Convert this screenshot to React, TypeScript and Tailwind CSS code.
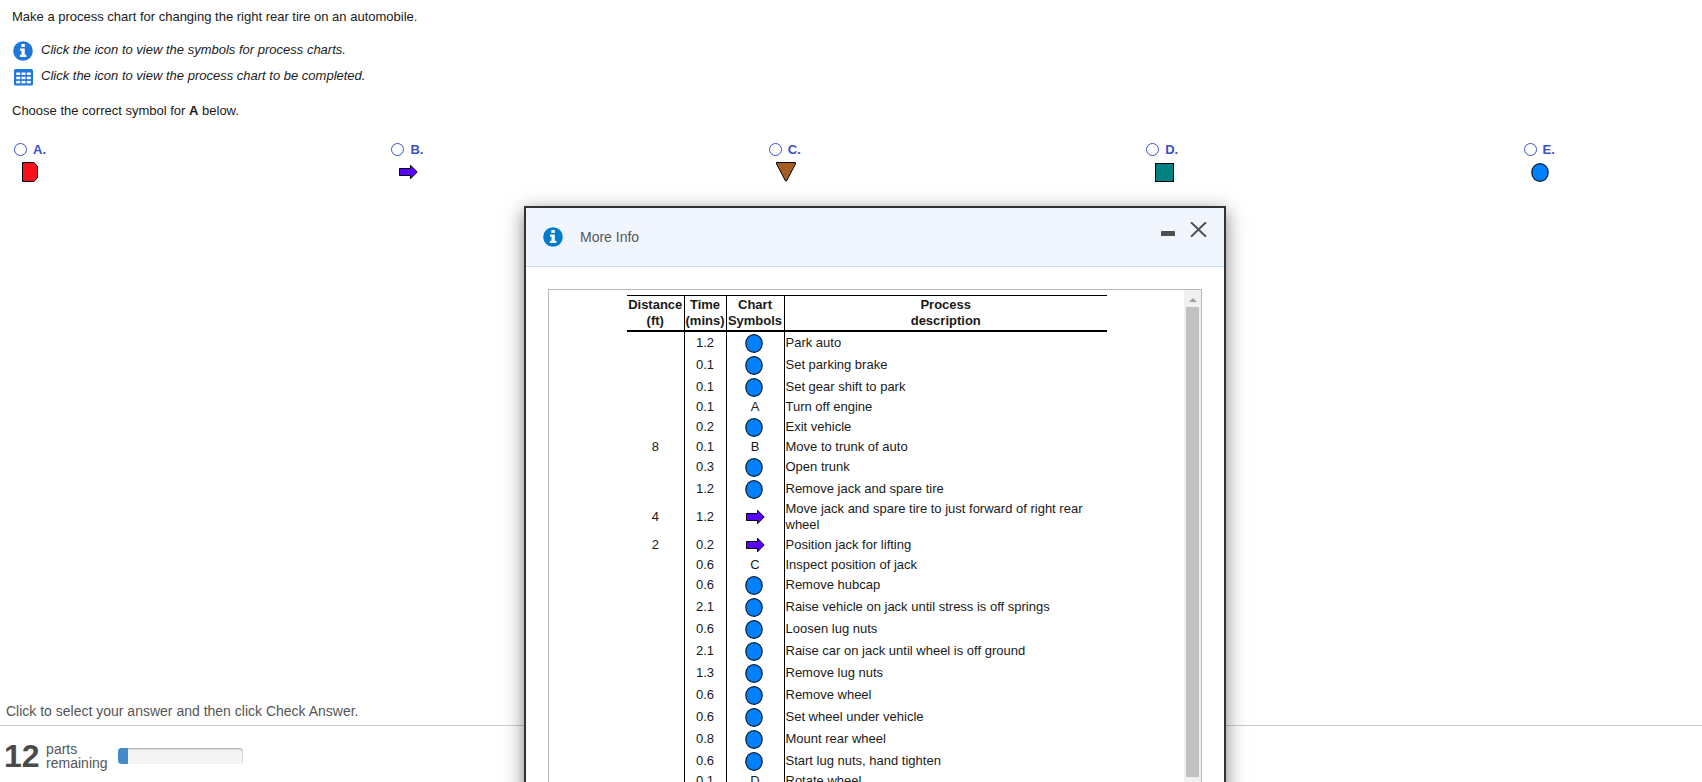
import type { ReactNode } from 'react';

type SymbolName = 'delay' | 'arrow' | 'triangle' | 'square' | 'circle';

const OPTIONS: { label: string; symbol: SymbolName }[] = [
  { label: 'A.', symbol: 'delay' },
  { label: 'B.', symbol: 'arrow' },
  { label: 'C.', symbol: 'triangle' },
  { label: 'D.', symbol: 'square' },
  { label: 'E.', symbol: 'circle' },
];

// distance, time, symbol ("circle" / "arrow" or a letter), description
const ROWS: [string, string, string, string][] = [
  ['', '1.2', 'circle', 'Park auto'],
  ['', '0.1', 'circle', 'Set parking brake'],
  ['', '0.1', 'circle', 'Set gear shift to park'],
  ['', '0.1', 'A', 'Turn off engine'],
  ['', '0.2', 'circle', 'Exit vehicle'],
  ['8', '0.1', 'B', 'Move to trunk of auto'],
  ['', '0.3', 'circle', 'Open trunk'],
  ['', '1.2', 'circle', 'Remove jack and spare tire'],
  ['4', '1.2', 'arrow', 'Move jack and spare tire to just forward of right rear wheel'],
  ['2', '0.2', 'arrow', 'Position jack for lifting'],
  ['', '0.6', 'C', 'Inspect position of jack'],
  ['', '0.6', 'circle', 'Remove hubcap'],
  ['', '2.1', 'circle', 'Raise vehicle on jack until stress is off springs'],
  ['', '0.6', 'circle', 'Loosen lug nuts'],
  ['', '2.1', 'circle', 'Raise car on jack until wheel is off ground'],
  ['', '1.3', 'circle', 'Remove lug nuts'],
  ['', '0.6', 'circle', 'Remove wheel'],
  ['', '0.6', 'circle', 'Set wheel under vehicle'],
  ['', '0.8', 'circle', 'Mount rear wheel'],
  ['', '0.6', 'circle', 'Start lug nuts, hand tighten'],
  ['', '0.1', 'D', 'Rotate wheel'],
];

function InfoIcon({ className }: { className: string }) {
  return (
    <svg viewBox="0 0 20 20" className={`h-5 w-5 shrink-0 ${className}`}>
      <circle cx="10" cy="10" r="9.8" fill="currentColor" />
      <path d="M8.4 3h3.4v3H8.4zM7 7.6h4.8v6.2h1.5v2.3H6.9v-2.3h1.6V9.8H7z" fill="#fff" />
    </svg>
  );
}

function TableIcon() {
  return (
    <svg viewBox="0 0 19 17" className="h-[17px] w-[19px] shrink-0">
      <rect width="19" height="16.5" rx="1.5" fill="#2176d9" />
      {[3.5, 7.7, 11.9].map((y) =>
        [2.2, 7.5, 12.8].map((x) => <rect key={`${x}-${y}`} x={x} y={y} width="4" height="2.5" fill="#fff" />),
      )}
    </svg>
  );
}

function ChartSymbol({ name }: { name: SymbolName }) {
  if (name === 'delay') {
    return (
      <svg viewBox="0 0 16 20" className="h-5 w-4">
        <path d="M.5.5H12l3.5 4v11l-3.5 4H.5z" fill="#fa0f1a" stroke="#000" />
      </svg>
    );
  }
  if (name === 'arrow') {
    return (
      <svg viewBox="0 0 20 16" className="h-4 w-5">
        <path d="M.5 4.5h11v-3.3L18.2 8l-6.7 6.8v-3.3H.5z" fill="#5a00ff" stroke="#000" />
      </svg>
    );
  }
  if (name === 'triangle') {
    return (
      <svg viewBox="0 0 20 20" className="h-5 w-5">
        <path d="M.6.5h18.8v1.6L10.5 19h-1L.6 2.1z" fill="#a55d23" stroke="#000" />
      </svg>
    );
  }
  if (name === 'square') {
    return (
      <svg viewBox="0 0 19 19" className="h-[19px] w-[19px]">
        <rect x=".5" y=".5" width="18" height="18" fill="#008080" stroke="#000" />
      </svg>
    );
  }
  return (
    <svg viewBox="0 0 18 19" className="h-[19px] w-[18px]">
      <ellipse cx="9" cy="9.5" rx="8.2" ry="8.9" fill="#0080ff" stroke="#0a1a2a" strokeWidth="1.2" />
    </svg>
  );
}

const SYMBOL_OFFSET: Record<SymbolName, string> = {
  delay: 'pl-2',
  arrow: 'pl-2 pt-0.5',
  triangle: 'pl-[7px]',
  square: 'pl-[9px] pt-px',
  circle: 'pl-[7px] pt-px',
};

function IconLine({ icon, children }: { icon: ReactNode; children: ReactNode }) {
  return (
    <div className="flex h-[26px] items-start">
      <span className="mr-[7px] flex w-5 pt-px">{icon}</span>
      <em>{children}</em>
    </div>
  );
}

function ProcessTable() {
  return (
    <table className="ml-[78px] mt-[5px] w-[480px] table-fixed border-collapse">
      <colgroup>
        <col className="w-[57px]" />
        <col className="w-[42px]" />
        <col className="w-[58px]" />
        <col className="w-[323px]" />
      </colgroup>
      <thead>
        <tr className="h-[35px] border-t border-b-2 border-black align-top">
          <th className="p-0 pt-px leading-[15.5px]">Distance<br />(ft)</th>
          <th className="border-l border-black p-0 pt-px leading-[15.5px]">Time<br />(mins)</th>
          <th className="border-l border-black p-0 pt-px leading-[15.5px]">Chart<br />Symbols</th>
          <th className="border-l border-black p-0 pt-px leading-[15.5px]">Process<br />description</th>
        </tr>
      </thead>
      <tbody>
        {ROWS.map(([distance, time, symbol, description], index) => {
          const isPicture = symbol === 'circle' || symbol === 'arrow';
          const pictureHeight = index === 0 ? 'h-[23px]' : 'h-[22px]';
          return (
            <tr key={description} className={isPicture ? pictureHeight : 'h-[18px]'}>
              <td className="p-0 text-center">{distance}</td>
              <td className="border-l border-black p-0 text-center">{time}</td>
              <td className="border-l border-black p-0 text-center">
                {isPicture ? (
                  <span className={symbol === 'circle' ? 'mt-px -mb-px flex justify-center pr-0.5' : 'flex justify-center pl-0.5'}>
                    <ChartSymbol name={symbol as SymbolName} />
                  </span>
                ) : (
                  symbol
                )}
              </td>
              <td className="border-l border-black py-px pr-4 pl-px">{description}</td>
            </tr>
          );
        })}
      </tbody>
    </table>
  );
}

function MoreInfoDialog() {
  return (
    <div className="absolute top-[206px] left-[524px] flex h-[620px] w-[702px] flex-col border-2 border-[#333] bg-white shadow-[0_5px_18px_rgba(0,0,0,0.5)]">
      <header className="flex h-[59px] shrink-0 border-b border-[#c5e3fb] bg-[#f1f6fe]">
        <div className="flex flex-1 items-center pl-[17px] text-sm text-[#555]">
          <InfoIcon className="text-[#007ccf]" />
          <span className="ml-[17px]">More Info</span>
        </div>
        <div className="mr-[17px] flex items-start gap-[15px] pt-[14px]">
          <span className="mt-[9px] h-[5px] w-[14px] rounded-t-[1px] bg-[#505050]" />
          <svg viewBox="0 0 17 15" className="h-[15px] w-[17px]">
            <path d="M1 .3 16 14.7M16 .3 1 14.7" stroke="#505050" strokeWidth="2" />
          </svg>
        </div>
      </header>
      <div className="mt-[22px] ml-[22px] flex w-[654px] flex-1 border border-[#b8b8b8]">
        <div className="flex-1">
          <ProcessTable />
        </div>
        <div className="flex w-[17px] flex-col items-center bg-[#f1f1f1]">
          <div className="flex h-[17px] items-center pt-0.5">
            <svg viewBox="0 0 8 4" className="h-1 w-2">
              <path d="M0 4 4 0l4 4z" fill="#a0a0a0" />
            </svg>
          </div>
          <div className="h-[470px] w-[13px] bg-[#c1c1c1]" />
        </div>
      </div>
    </div>
  );
}

export default function App() {
  return (
    <div className="relative flex h-[782px] w-[1702px] flex-col overflow-hidden bg-white font-['Liberation_Sans',Arial,sans-serif] text-[13px] leading-4 text-[#1a1a1a]">
      <main className="flex-1 pt-[9px] pl-3">
        <p>Make a process chart for changing the right rear tire on an automobile.</p>
        <div className="mt-[17px] pl-0.5">
          <IconLine icon={<InfoIcon className="-mt-0.5 -ml-px text-[#2176d9]" />}>
            Click the icon to view the symbols for process charts.
          </IconLine>
          <IconLine icon={<TableIcon />}>Click the icon to view the process chart to be completed.</IconLine>
        </div>
        <p className="mt-[9px]">
          Choose the correct symbol for <b>A</b> below.
        </p>
        <div className="mt-[22px] grid grid-cols-[repeat(5,377.4px)] pl-0.5">
          {OPTIONS.map(({ label, symbol }) => (
            <div key={label}>
              <div className="flex h-[17px] items-center gap-1.5 text-[#3a50cc]">
                <span className="h-[13px] w-[13px] rounded-full border border-[#3a50cc]" />
                <b className="pt-px">{label}</b>
              </div>
              <div className={`mt-1 ${SYMBOL_OFFSET[symbol]}`}>
                <ChartSymbol name={symbol} />
              </div>
            </div>
          ))}
        </div>
      </main>
      <p className="pb-[6px] pl-1.5 text-sm leading-4 text-[#555]">Click to select your answer and then click Check Answer.</p>
      <footer className="flex h-[57px] border-t border-[#c8cad6] pl-1 text-sm leading-[14px] text-[#555]">
        <span className="pt-[14px] text-[32px] leading-8 font-bold text-[#4a4a4a]">12</span>
        <span className="ml-[6.5px] pt-4">
          parts
          <br />
          remaining
        </span>
        <div className="mt-[22px] ml-2.5 h-4 w-[125px] overflow-hidden rounded bg-[#f4f4f4] shadow-[inset_0_1px_2px_rgba(0,0,0,0.35)]">
          <div className="h-full w-[10px] bg-[#428bca]" />
        </div>
      </footer>
      <MoreInfoDialog />
    </div>
  );
}
